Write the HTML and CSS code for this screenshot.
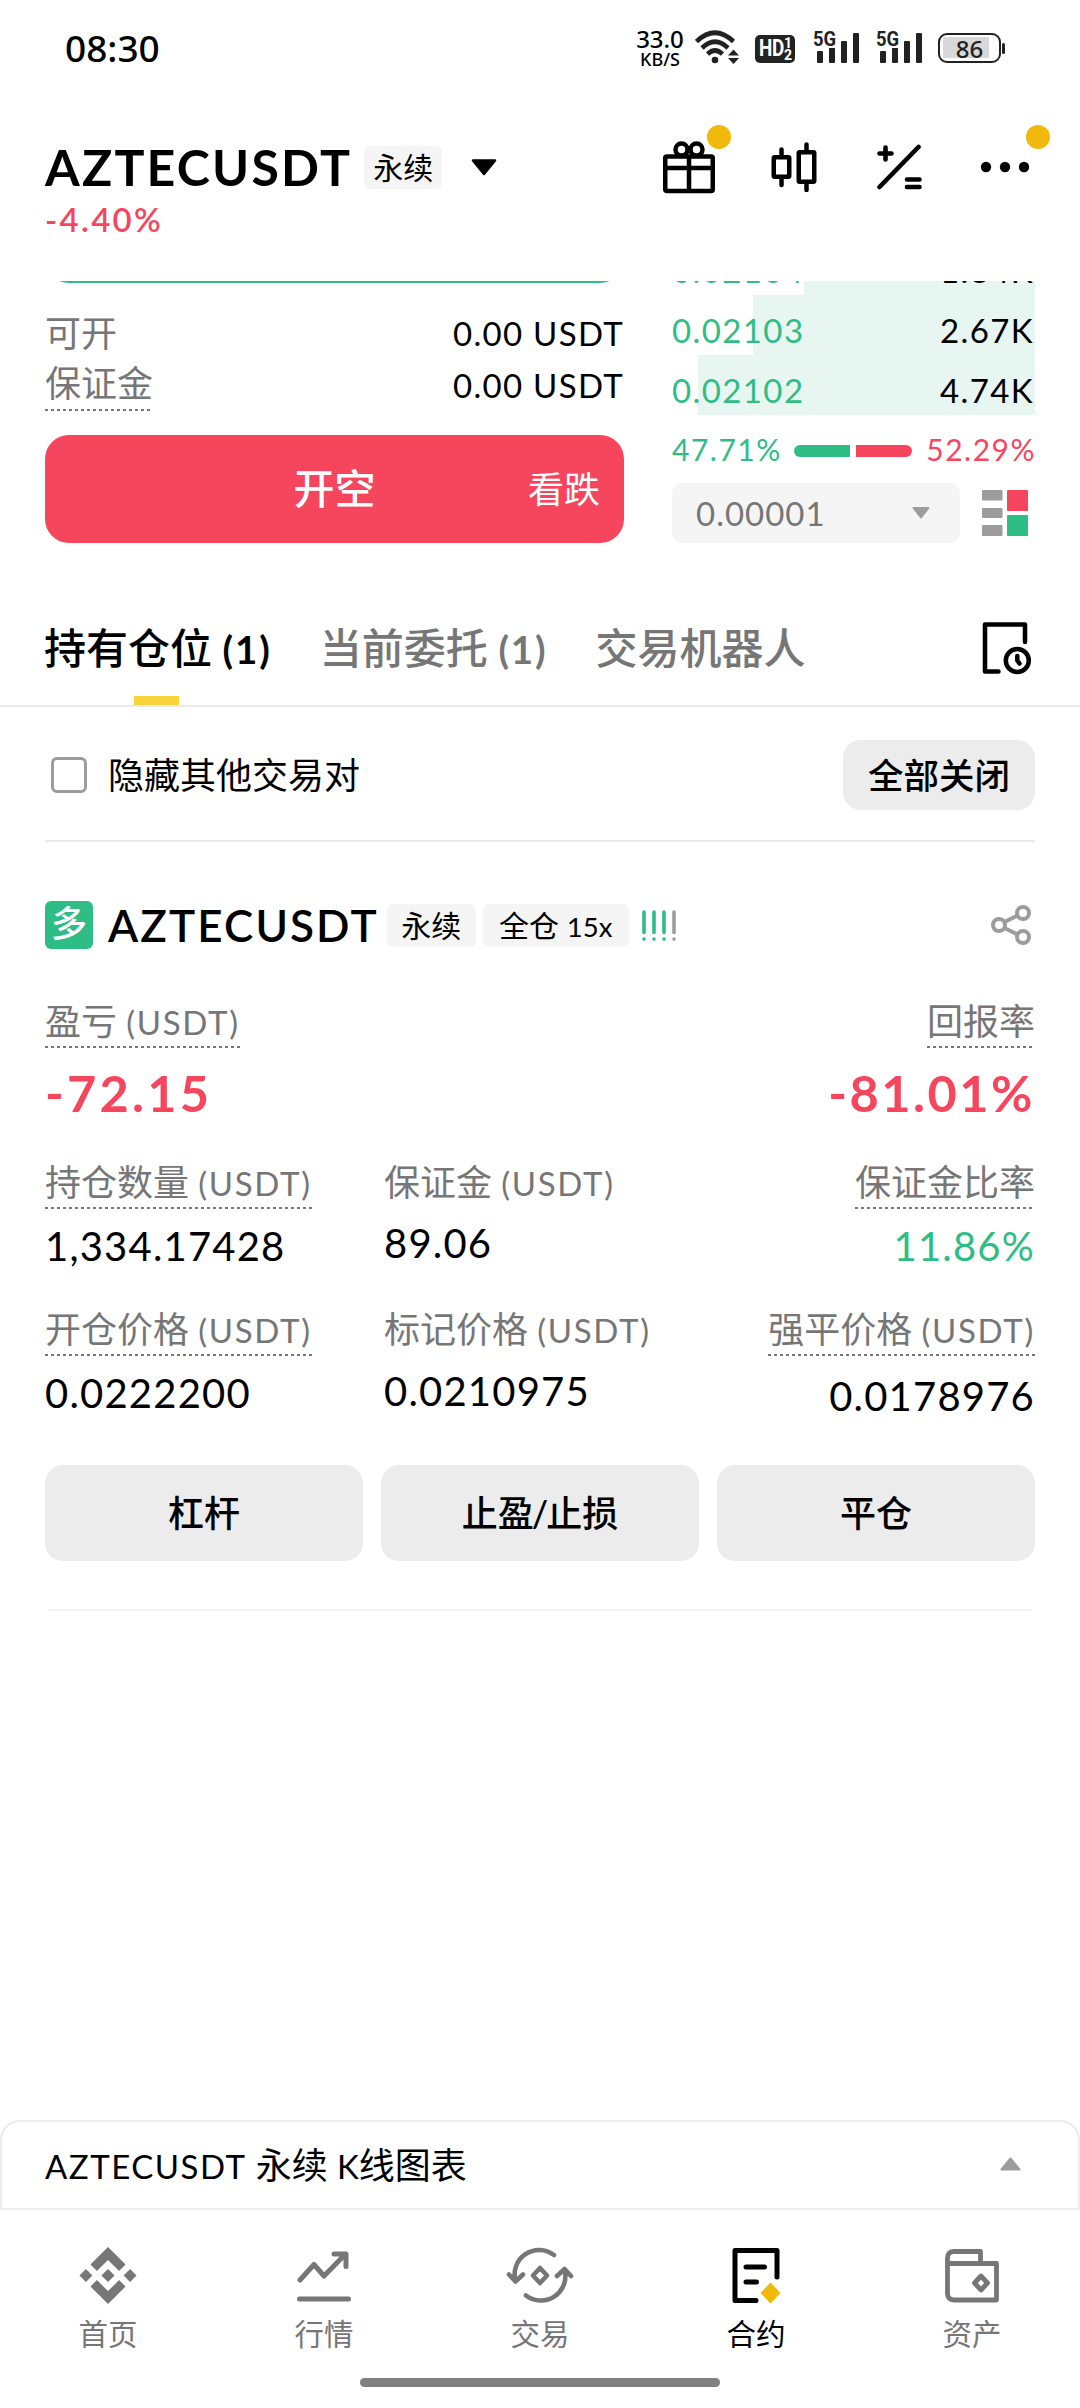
FILE: index.html
```html
<!DOCTYPE html>
<html lang="zh-CN">
<head>
<meta charset="utf-8">
<title>AZTECUSDT 永续</title>
<link rel="stylesheet" href="styles.css">
</head>
<body>
<div class="screen">
  <div class="status">
    <span class="time">08:30</span>
    <div class="status-icons">
      <div class="speed"><span class="speed-n">33.0</span><span class="speed-u">KB/S</span></div>
      <svg class="wifi" width="44" height="34" viewBox="0 0 44 34"><g fill="none" stroke="#222" stroke-width="4.6"><path d="M1.500 11.500Q20 -6 38.500 11.500"/><path d="M7 18Q20 5.500 33 18"/><path d="M12.500 24Q20 17 27.500 24"/></g><circle cx="20" cy="30" r="3.300" fill="#222"/><path d="M33 25.500l5.500-6 5.500 6zM33 28l5.500 6 5.500-6z" fill="#222"/></svg>
      <div class="hd"><span class="hd-t">HD</span><span class="hd-n"><i>1</i><i>2</i></span></div>
      <div class="signal"><span class="g5">5G</span><svg width="46" height="32" viewBox="0 0 46 32" fill="#222"><rect x="4" y="20" width="6" height="12" rx="1"/><rect x="16" y="16.500" width="6" height="15.500" rx="1"/><rect x="28" y="10" width="6" height="22" rx="1"/><rect x="40" y="2" width="6" height="30" rx="1"/></svg></div>
      <div class="signal s2"><span class="g5">5G</span><svg width="46" height="32" viewBox="0 0 46 32" fill="#222"><rect x="4" y="20" width="6" height="12" rx="1"/><rect x="16" y="16.500" width="6" height="15.500" rx="1"/><rect x="28" y="10" width="6" height="22" rx="1"/><rect x="40" y="2" width="6" height="30" rx="1"/></svg></div>
      <div class="battery"><span>86</span></div><b class="nub"></b>
    </div>
  </div>

  <header class="header">
    <div class="title-row">
      <h1 class="pair">AZTECUSDT</h1><span class="tag">永续</span>
      <svg class="drop" width="26" height="17" viewBox="0 0 26 17"><path d="M2 1.500h22L13 15z" stroke="#000" stroke-width="2.500" stroke-linejoin="round"/></svg>
      <div class="tools">
        <span class="tool gift"><svg width="52" height="53" viewBox="0 0 52 53" fill="none" stroke="#000" stroke-width="4.500"><rect x="2.250" y="15.500" width="47.500" height="34.500" rx="1.500"/><path d="M2 27h48M26 14v36"/><circle cx="18.500" cy="8.500" r="6"/><circle cx="33.500" cy="8.500" r="6"/></svg><b class="dot"></b></span>
        <span class="tool candle"><svg width="46" height="50" viewBox="0 0 46 50" fill="none" stroke="#000" stroke-width="4.500" stroke-linecap="round"><rect x="2.750" y="15.250" width="15.500" height="19.500" rx="1"/><rect x="27.750" y="10.250" width="15.500" height="29.500" rx="1"/><path d="M10.500 7.500v6M10.500 37v6M35.500 2.500v6M35.500 42v6"/></svg></span>
        <span class="tool calc"><svg width="45" height="46" viewBox="0 0 45 46" fill="none" stroke="#000" stroke-width="4.600" stroke-linecap="round"><path d="M2.500 43L41.500 3M2.500 9.500h12M8.500 3.500v12M30 35.500h12.500M30 43h12.500"/></svg></span>
        <span class="tool more"><svg width="50" height="12" viewBox="0 0 50 12"><circle cx="6" cy="6" r="5.200"/><circle cx="25" cy="6" r="5.200"/><circle cx="44" cy="6" r="5.200"/></svg><b class="dot"></b></span>
      </div>
    </div>
    <div class="change">-4.40%</div>
  </header>

  <section class="trade">
    <div class="order">
      <div class="long"></div>
      <div class="kv"><span class="zh">可开</span><span class="v">0.00 USDT</span></div>
      <div class="kv"><span class="zh dotted">保证金</span><span class="v">0.00 USDT</span></div>
      <button class="short"><span>开空</span><small>看跌</small></button>
    </div>
    <div class="book">
      <div class="bid first" style="--w:231px"><span class="p">0.02104</span><span>1.84K</span></div>
      <div class="bid" style="--w:282px"><span class="p">0.02103</span><span>2.67K</span></div>
      <div class="bid" style="--w:337px"><span class="p">0.02102</span><span>4.74K</span></div>
      <div class="ratio"><span class="buy">47.71%</span><b class="bar g"></b><b class="bar r"></b><span class="sell">52.29%</span></div>
      <div class="prec">
        <div class="select"><span>0.00001</span><svg width="18" height="12" viewBox="0 0 18 12" fill="#9c9c9c"><path d="M1.500 1h15L9 10.500z" stroke="#9c9c9c" stroke-width="2" stroke-linejoin="round"/></svg></div>
        <svg width="46" height="46" viewBox="0 0 46 46"><g fill="#9c9c9c"><rect width="20.500" height="10.500" rx="1"/><rect y="18" width="20.500" height="10" rx="1"/><rect y="35" width="20.500" height="11" rx="1"/></g><rect x="25" width="21" height="21" rx="1" fill="#f6465d"/><rect x="25" y="25" width="21" height="21" rx="1" fill="#2ebd85"/></svg>
      </div>
    </div>
  </section>

  <nav class="tabs">
    <span class="tab on">持有仓位 <span class="en">(1)</span></span><span class="tab">当前委托 <span class="en">(1)</span></span><span class="tab">交易机器人</span>
    <svg class="history" width="50" height="53" viewBox="0 0 50 53" fill="none" stroke="#000" stroke-width="4.500" stroke-linecap="round" stroke-linejoin="round"><path d="M43 20V2.500H3V49.500H16.500"/><circle cx="35.300" cy="38.500" r="11.500"/><path d="M35.300 34v4.500l2.200 3"/></svg>
  </nav>

  <div class="filter"><b class="check"></b><span class="zh">隐藏其他交易对</span><button class="close-all">全部关闭</button></div>

  <section class="position">
    <div class="p-head">
      <span class="side">多</span><h2 class="p-pair">AZTECUSDT</h2><span class="tag t2">永续</span><span class="tag t3">全仓 <span class="lev">15x</span></span>
      <svg class="adl" width="34" height="31" viewBox="0 0 34 31" stroke-width="3.600" stroke-linecap="round"><path d="M2 2v20.500M2 29v.1M12 2v20.500M12 29v.1M22 2v20.500M22 29v.1" stroke="#2ebd85"/><path d="M32 2v20.500M32 29v.1" stroke="#9c9c9c"/></svg>
      <svg class="share" width="40" height="40" viewBox="0 0 40 40" fill="none" stroke="#9c9c9c" stroke-width="4"><circle cx="8" cy="20" r="6"/><circle cx="32" cy="8" r="6"/><circle cx="32" cy="32" r="6"/><path d="M13.500 17L26.500 10.500M13.500 23L26.500 29.500"/></svg>
    </div>
    <div class="cells pnl">
      <div class="cell"><span class="label dotted">盈亏 <span class="en">(USDT)</span></span><span class="big loss">-72.15</span></div>
      <div class="cell end"><span class="label dotted">回报率</span><span class="big">-81.01%</span></div>
    </div>
    <div class="cells r1">
      <div class="cell c1"><span class="label dotted">持仓数量 <span class="en">(USDT)</span></span><span class="num">1,334.17428</span></div>
      <div class="cell c2"><span class="label">保证金 <span class="en">(USDT)</span></span><span class="num">89.06</span></div>
      <div class="cell end"><span class="label dotted">保证金比率</span><span class="num green">11.86%</span></div>
    </div>
    <div class="cells r2">
      <div class="cell c1"><span class="label dotted">开仓价格 <span class="en">(USDT)</span></span><span class="num">0.0222200</span></div>
      <div class="cell c2"><span class="label">标记价格 <span class="en">(USDT)</span></span><span class="num">0.0210975</span></div>
      <div class="cell end"><span class="label dotted">强平价格 <span class="en">(USDT)</span></span><span class="num">0.0178976</span></div>
    </div>
    <div class="actions"><button>杠杆</button><button>止盈<span class="slash">/</span>止损</button><button>平仓</button></div>
  </section>
  <div class="space"></div>

  <div class="chart"><span><span class="en">AZTECUSDT</span> 永续 <span class="k">K</span>线图表</span><svg width="21" height="14" viewBox="0 0 21 14"><path d="M1.500 12.500h18L10.500 1.500z" fill="#9c9c9c" stroke="#9c9c9c" stroke-width="2" stroke-linejoin="round"/></svg></div>
  <nav class="nav">
    <a><svg width="58" height="57" viewBox="0 0 126.610 126.610" fill="#767676"><path d="M38.730 53.200l24.590-24.580 24.600 24.600 14.300-14.310L63.320 0l-38.900 38.900zM0 63.310l14.300-14.310 14.310 14.310-14.310 14.300zM38.730 73.410l24.590 24.590 24.600-24.600 14.310 14.290-38.900 38.910-38.910-38.880zM98 63.310l14.300-14.310 14.310 14.300-14.310 14.320zM77.830 63.300L63.320 48.780 48.810 63.280l14.510 14.500z"/></svg><span>首页</span></a>
    <a><svg width="56" height="57" viewBox="0 0 56 57" fill="none" stroke="#767676" stroke-width="5" stroke-linecap="round" stroke-linejoin="round"><path d="M4 33L18 17.500 28 29 49.500 7M38 7H50V19.500M3.500 52H52.500"/></svg><span>行情</span></a>
    <a><svg width="68" height="57" viewBox="0 0 68 57" fill="none" stroke="#767676" stroke-width="4.600" stroke-linecap="round" stroke-linejoin="round"><path d="M48 8A24.500 24.500 0 0 0 9.500 34M3 27.500l6.500 7 7.500-7M20 48.500A24.500 24.500 0 0 0 58.500 22.500M51 29l7.500-7 6.500 7M34 21l7 7.500-7 7.500-7-7.500z"/></svg><span>交易</span></a>
    <a class="cur"><svg width="50" height="57" viewBox="0 0 50 57" fill="none" stroke="#000" stroke-width="5" stroke-linecap="round" stroke-linejoin="round"><path d="M46 30V3.500H4V53.500H25M15 20h18.500M15 35h10.500"/><path d="M39.500 35.500l10 10.500-10 10.500-10-10.500z" fill="#f0b90b" stroke="none"/></svg><span>合约</span></a>
    <a><svg width="56" height="57" viewBox="0 0 56 57" fill="none" stroke="#767676" stroke-width="4.800" stroke-linejoin="round"><path d="M3.500 16.500H52.500V53H10Q3.500 53 3.500 46.500V11Q3.500 4.500 10 4.500H36.500V16"/><path d="M37 29l6.500 7-6.500 7-6.500-7z"/></svg><span>资产</span></a>
  </nav>
  <div class="home"></div>
</div>
</body>
</html>
```
FILE: styles.css
```css
* { box-sizing: border-box; }
body { margin: 0; background: #fff; color: #000; font-family: Lato, "Noto Sans CJK SC", sans-serif; }
h1, h2 { margin: 0; }
button { border: 0; padding: 0; font-family: inherit; color: #000; }
svg { display: block; flex: none; }
.screen { width: 1080px; height: 2408px; display: flex; flex-direction: column; background: #fff; overflow: hidden; }
.en, .k, .lev { font-size: .917em; line-height: 1; }
.en { letter-spacing: 1.7px; }

.status { height: 96px; flex: none; display: flex; justify-content: space-between; padding: 0 75px 0 65px; }
.time { font: 500 37px/96px "Noto Sans", sans-serif; }
.status-icons { display: flex; align-items: flex-start; color: #222; }
.speed { width: 50px; margin: 26px 10px 0 0; display: flex; flex-direction: column; align-items: center; color: #000; font-family: "Noto Sans", sans-serif; font-weight: 500; }
.speed-n { font-size: 24px; line-height: 25px; }
.speed-u { font-size: 18px; line-height: 17px; }
.wifi { margin-top: 30px; }
.hd { width: 40px; height: 28px; margin: 35px 0 0 16px; border-radius: 5px; background: #222; color: #fff; display: flex; padding-left: 4px; font-family: Roboto, sans-serif; font-weight: 700; }
.hd-t { font-size: 23px; line-height: 28px; letter-spacing: -.5px; width: 25px; transform: scaleX(.82); transform-origin: left; }
.hd-n { display: flex; flex-direction: column; padding-top: 2px; }
.hd-n i { font: 700 14px/12px Roboto, sans-serif; }
.signal { margin: 31px 0 0 18px; position: relative; }
.s2 { margin-left: 17px; }
.g5 { position: absolute; left: 0; top: -1px; font: 700 20px/18px Roboto, sans-serif; transform: scaleX(.92); transform-origin: left; background: #fff; }
.battery { width: 63px; height: 30px; margin: 33px 0 0 16px; border: 2.500px solid #222; border-radius: 9px; background: linear-gradient(#d8d8d8, #d8d8d8) 3px 2px / 46px 21px no-repeat; font: 500 24px/27px "Noto Sans", sans-serif; text-align: center; }
.nub { width: 3px; height: 11px; margin: 43px 0 0 1px; border-radius: 2px; background: #222; }

.header { height: 185px; flex: none; padding: 41px 45px 0; }
.title-row { height: 60px; display: flex; align-items: center; }
.pair { font-size: 50px; line-height: 59px; font-weight: 700; letter-spacing: 2.200px; }
.tag { height: 43px; border-radius: 6px; background: #f5f5f5; font-size: 30px; line-height: 42px; text-align: center; white-space: nowrap; }
.title-row .tag { width: 78px; margin-left: 12px; }
.drop { margin-left: 29px; }
.tools { margin-left: auto; display: flex; align-items: center; }
.tool { position: relative; }
.candle { margin-left: 56px; }
.calc { margin-left: 60px; }
.more { margin: 0 5px 0 58px; }
.dot { position: absolute; width: 24px; height: 24px; border-radius: 50%; background: #f0b90b; left: 44px; top: -16px; }
.more .dot { left: 46px; top: -36px; }
.change { font-size: 33px; line-height: 44px; font-weight: 600; color: #f6465d; letter-spacing: 2.300px; }

.trade { height: 262px; flex: none; overflow: hidden; padding: 0 45px; display: flex; justify-content: space-between; }
.order { width: 579px; }
.long { height: 108px; margin: -106px 0 25px; border-radius: 24px; background: #2ebd85; }
.kv { height: 52px; display: flex; justify-content: space-between; align-items: flex-start; line-height: 51px; }
.kv .zh { font-size: 36px; line-height: 50px; color: #767676; }
.kv .v { font-size: 33px; letter-spacing: 1.300px; }
.kv .dotted { line-height: 47px; height: 51px; }
.dotted { background: repeating-linear-gradient(90deg, #767676 0 3px, transparent 3px 6px) left bottom / 100% 2px no-repeat; }
.short { width: 579px; height: 108px; margin-top: 23px; display: grid; grid-template-columns: 1fr auto 1fr; align-items: center; border-radius: 24px; background: #f6465d; color: #fff; padding: 0 24px 4px; }
.short span { grid-column: 2; font-size: 41px; font-weight: 500; padding-bottom: 2px; }
.short small { font-size: 36px; text-align: right; }
.book { width: 363px; }
.bid { height: 60px; display: flex; justify-content: space-between; padding: 0 1px 0 0; font-size: 33px; letter-spacing: 1.400px; line-height: 71px; background: linear-gradient(#e8f6f1, #e8f6f1) right / var(--w) 100% no-repeat; }
.first { margin-top: -46px; }
.p, .buy, .green { color: #2ebd85; }
.sell { color: #f6465d; }
.ratio { height: 68px; padding-top: 3px; display: flex; align-items: center; font-size: 30px; letter-spacing: 1.500px; }
.ratio span { line-height: 40px; margin-top: -3px; }
.bar { width: 56px; height: 12px; }
.bar.g { background: #2ebd85; border-radius: 6px 0 0 6px; margin-left: 12px; }
.bar.r { background: #f6465d; border-radius: 0 6px 6px 0; margin-left: 6px; }
.ratio .sell { margin-left: auto; margin-right: -1px; }
.prec { display: flex; align-items: center; justify-content: space-between; padding-right: 7px; }
.select { width: 288px; height: 60px; border-radius: 10px; background: #f5f5f5; color: #767676; display: flex; align-items: center; justify-content: space-between; padding: 0 30px 0 24px; font-size: 33px; letter-spacing: 1px; }

.tabs { height: 116px; flex: none; margin-top: 48px; border-bottom: 2px solid #eaeaea; padding: 0 48px 0 44px; display: flex; align-items: center; }
.tab { height: 114px; line-height: 114px; font-size: 42px; font-weight: 500; color: #767676; margin-right: 48px; position: relative; white-space: nowrap; }
.tab .en { font-weight: 700; letter-spacing: 1.900px; }
.on { color: #000; }
.on::after { content: ""; position: absolute; left: 90px; bottom: 0; width: 45px; height: 9px; background: #f8d33a; }
.history { margin-left: auto; }

.filter { height: 135px; flex: none; margin: 0 45px; padding-top: 3px; border-bottom: 2px solid #eaeaea; display: flex; align-items: center; font-size: 36px; }
.filter .zh { margin-top: -4px; margin-left: -1px; }
.check { width: 36px; height: 36px; margin: 0 22px 0 6px; border: 3px solid #9c9c9c; border-radius: 6px; }
.close-all { width: 192px; height: 70px; margin-left: auto; padding-bottom: 3px; border-radius: 18px; background: #ececec; font-size: 35.500px; font-weight: 500; }

.position { flex: none; padding: 59px 45px 0; }
.p-head { height: 48px; display: flex; align-items: center; }
.side { width: 48px; height: 48px; border-radius: 6px; background: #2ebd85; color: #fff; font-size: 36px; line-height: 45px; font-weight: 500; text-align: center; }
.p-pair { font-size: 44px; font-weight: 600; margin-left: 15px; letter-spacing: 2.100px; }
.t2 { width: 89px; margin-left: 8px; }
.t3 { width: 146px; margin-left: 7px; }
.adl { margin-left: 13px; }
.share { margin: 0 4px 0 auto; }
.cells { display: flex; justify-content: space-between; }
.cell { display: flex; flex-direction: column; align-items: flex-start; }
.cell.end { align-items: flex-end; }
.label { height: 46px; font-size: 36px; line-height: 38px; color: #767676; white-space: nowrap; }
.c1 { width: 339px; }
.c2 { margin-right: auto; }
.pnl { margin-top: 53px; }
.big { margin-top: 15px; margin-bottom: 2px; font-size: 50.500px; line-height: 60px; font-weight: 700; color: #f6465d; letter-spacing: 2.500px; }
.loss { letter-spacing: 3.200px; }
.num { font-size: 40px; line-height: 48px; letter-spacing: 1.200px; }
.r1 { margin-top: 38px; }
.r1 .num { margin-top: 13px; }
.r1 .c2 .num { margin-top: 10px; }
.r2 { margin-top: 40px; }
.r2 .num { margin-top: 13px; }
.r2 .c2 .num { margin-top: 11px; }
.r2 .end .num { margin-top: 16px; }
.actions { margin-top: 45px; display: flex; gap: 18px; }
.actions button { flex: 1; height: 96px; padding-bottom: 5px; border-radius: 18px; background: #ececec; font-size: 36px; font-weight: 500; }
.slash { margin: 0 -2px; }
.position::after { content: ""; display: block; height: 2px; margin: 48px 3px 0; background: #f2f2f2; }
.space { flex: 1; min-height: 0; }

.chart { height: 90px; flex: none; border: 2px solid #ececec; border-radius: 20px 20px 0 0; padding: 0 57px 2px 43px; display: flex; align-items: center; justify-content: space-between; font-size: 36px; }
.chart > span { margin-top: -3px; }
.chart .en { letter-spacing: 1.500px; }
.nav { height: 168px; flex: none; display: flex; padding-top: 37px; }
.nav a { flex: 1; display: flex; flex-direction: column; align-items: center; gap: 8px; font-size: 29.500px; line-height: 44px; color: #767676; }
.nav .cur { color: #000; }
.home { width: 360px; height: 9px; flex: none; margin: 0 auto 21px; border-radius: 5px; background: #808080; }
```
